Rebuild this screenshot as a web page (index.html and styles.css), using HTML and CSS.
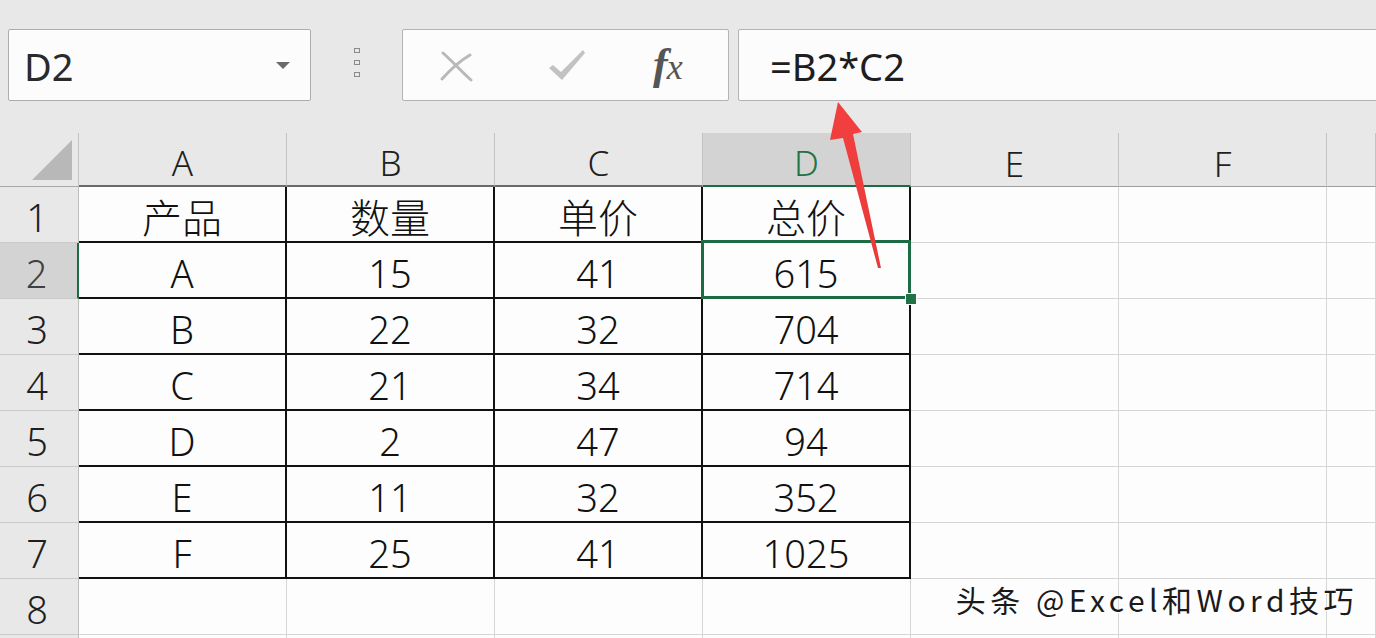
FILE: index.html
```html
<!DOCTYPE html>
<html lang="zh-CN">
<head>
<meta charset="utf-8">
<title>Excel</title>
<link rel="stylesheet" href="styles.css">
</head>
<body>
<div class="app">
  <div class="fbar">
    <div class="namebox">
      <span class="nb-text">D2</span>
      <svg class="nb-arrow" width="14" height="8" viewBox="0 0 14 8"><polygon points="0,0 14,0 7,7" fill="#6a6a6a"/></svg>
    </div>
    <div class="grip">
      <svg width="8" height="32" viewBox="0 0 8 32">
        <rect x="1.5" y="1.5" width="5" height="4" fill="none" stroke="#8a8a8a" stroke-width="1"/>
        <rect x="1.5" y="13.5" width="5" height="4" fill="none" stroke="#8a8a8a" stroke-width="1"/>
        <rect x="1.5" y="25.5" width="5" height="4" fill="none" stroke="#8a8a8a" stroke-width="1"/>
      </svg>
    </div>
    <div class="btnbox">
      <svg class="ic-x" width="34" height="32" viewBox="0 0 34 32">
        <path d="M3 3 C12 11 22 22 31 30" fill="none" stroke="#b9b9b9" stroke-width="3" stroke-linecap="round"/>
        <path d="M2 29 C10 20 18 12 30 5" fill="none" stroke="#b9b9b9" stroke-width="3" stroke-linecap="round"/>
      </svg>
      <svg class="ic-check" width="40" height="34" viewBox="0 0 40 34">
        <path d="M2 20 L6 17 L14 24 L36 2 L38 5 L15 32 Z" fill="#c2c2c2"/>
      </svg>
      <span class="fx">f<span class="fx-x">x</span></span>
    </div>
    <div class="formula">=B2*C2</div>
  </div>

  <div class="sheet">
    <div class="corner"><svg width="40" height="40" viewBox="0 0 40 40"><polygon points="40,0 40,40 0,40" fill="#b8b8b8"/></svg></div>
    <div class="ch ct">A</div>
    <div class="ch ct">B</div>
    <div class="ch ct">C</div>
    <div class="ch csel">D</div>
    <div class="ch">E</div>
    <div class="ch">F</div>
    <div class="ch"></div>

    <div class="rh">1</div>
    <div class="c t cjk">产品</div>
    <div class="c t cjk">数量</div>
    <div class="c t cjk">单价</div>
    <div class="c t cjk">总价</div>
    <div class="c"></div><div class="c"></div><div class="c"></div>

    <div class="rh rsel">2</div>
    <div class="c t">A</div>
    <div class="c t">15</div>
    <div class="c t">41</div>
    <div class="c t sel">615</div>
    <div class="c"></div><div class="c"></div><div class="c"></div>

    <div class="rh">3</div>
    <div class="c t">B</div>
    <div class="c t">22</div>
    <div class="c t">32</div>
    <div class="c t">704</div>
    <div class="c"></div><div class="c"></div><div class="c"></div>

    <div class="rh">4</div>
    <div class="c t">C</div>
    <div class="c t">21</div>
    <div class="c t">34</div>
    <div class="c t">714</div>
    <div class="c"></div><div class="c"></div><div class="c"></div>

    <div class="rh">5</div>
    <div class="c t">D</div>
    <div class="c t">2</div>
    <div class="c t">47</div>
    <div class="c t">94</div>
    <div class="c"></div><div class="c"></div><div class="c"></div>

    <div class="rh">6</div>
    <div class="c t">E</div>
    <div class="c t">11</div>
    <div class="c t">32</div>
    <div class="c t">352</div>
    <div class="c"></div><div class="c"></div><div class="c"></div>

    <div class="rh">7</div>
    <div class="c t">F</div>
    <div class="c t">25</div>
    <div class="c t">41</div>
    <div class="c t">1025</div>
    <div class="c"></div><div class="c"></div><div class="c"></div>

    <div class="rh">8</div>
    <div class="c"></div><div class="c"></div><div class="c"></div><div class="c"></div>
    <div class="c"></div><div class="c"></div><div class="c"></div>

    <div class="rh"></div>
    <div class="c"></div><div class="c"></div><div class="c"></div><div class="c"></div>
    <div class="c"></div><div class="c"></div><div class="c"></div>
  </div>

  <svg class="arrow" width="1376" height="638" viewBox="0 0 1376 638">
    <defs>
      <linearGradient id="ag" x1="0" y1="0" x2="0" y2="1">
        <stop offset="0" stop-color="#f2403f"/>
        <stop offset="1" stop-color="#e83a3a"/>
      </linearGradient>
    </defs>
    <polygon points="838,102 862,132 853,134 881,268 878,268 843,138 830,140" fill="url(#ag)"/>
  </svg>

  <div class="watermark">头条 @Excel和Word技巧</div>
</div>
</body>
</html>
```

FILE: styles.css
```css
html, body {
  margin: 0;
  padding: 0;
}
body {
  width: 1376px;
  height: 638px;
  overflow: hidden;
  background: #e8e8e8;
  font-family: "Noto Sans", "Noto Sans CJK SC", sans-serif;
}
.app {
  position: relative;
  width: 1376px;
  height: 638px;
  overflow: hidden;
}

/* formula bar */
.fbar {
  display: flex;
  align-items: stretch;
  height: 72px;
  padding: 29px 0 0 8px;
  margin-bottom: 32px;
}
.namebox {
  width: 303px;
  box-sizing: border-box;
  background: #fcfcfc;
  border: 1px solid #adadad;
  border-radius: 2px;
  display: flex;
  align-items: center;
  justify-content: space-between;
  padding: 0 20px 0 15px;
}
.nb-text {
  font-size: 38px;
  color: #2a2a2a;
  font-weight: 400;
  line-height: 1;
  padding-top: 2px;
}
.nb-arrow {
  margin-top: 2px;
}
.grip {
  width: 91px;
  display: flex;
  align-items: center;
  justify-content: center;
  padding-bottom: 4px;
}
.btnbox {
  width: 327px;
  box-sizing: border-box;
  background: #fcfcfc;
  border: 1px solid #b3b3b3;
  border-radius: 2px;
  display: flex;
  align-items: center;
  padding: 0 0 0 37px;
}
.ic-x {
  margin-top: 2px;
}
.ic-check {
  margin-left: 73px;
}
.fx {
  margin-left: 66px;
  font-family: "Liberation Serif", "DejaVu Serif", serif;
  font-style: italic;
  font-weight: 700;
  font-size: 44px;
  color: #555;
  line-height: 1;
  letter-spacing: -1px;
}
.fx-x {
  font-size: 36px;
  font-weight: 400;
}
.formula {
  flex: 1;
  margin-left: 9px;
  margin-right: -4px;
  background: #fcfcfc;
  border: 1px solid #b3b3b3;
  border-radius: 2px;
  font-size: 38px;
  color: #1e1e1e;
  display: flex;
  align-items: center;
  padding-left: 31px;
  padding-top: 1px;
}

/* sheet grid */
.sheet {
  display: grid;
  grid-template-columns: 79px repeat(6, 208px) 1fr;
  grid-template-rows: 54px repeat(8, 56px) 56px;
  background: #fdfdfd;
}
.corner {
  background: #e8e8e8;
  border-right: 1px solid #c4c4c4;
  border-bottom: 1px solid #a8a8a8;
  display: flex;
  align-items: flex-end;
  justify-content: flex-end;
  padding: 0 6px 6px 0;
}
.ch {
  background: #e8e8e8;
  border-right: 1px solid #c4c4c4;
  border-bottom: 1px solid #9e9e9e;
  display: flex;
  align-items: center;
  justify-content: center;
  font-size: 35px;
  font-weight: 300;
  color: #1f1f1f;
  padding-top: 7px;
  line-height: 1;
}
.ch.ct {
  border-bottom: 2px solid #6a6a6a;
}
.ch.csel {
  background: #d3d3d3;
  color: #217346;
  border-bottom: 2px solid #1f6b45;
}
.rh {
  background: #e8e8e8;
  border-right: 1px solid #bdbdbd;
  border-bottom: 1px solid #cacaca;
  display: flex;
  align-items: center;
  justify-content: center;
  font-size: 38px;
  font-weight: 300;
  color: #1f1f1f;
  padding-top: 5px;
  padding-right: 4px;
  line-height: 1;
}
.rh.rsel {
  background: #d3d3d3;
  color: #404040;
  border-right: 2px solid #1f6b45;
}
.c {
  box-sizing: border-box;
  background: #fdfdfd;
  border-right: 1px solid #d6d6d6;
  border-bottom: 1px solid #d6d6d6;
  display: flex;
  align-items: center;
  justify-content: center;
  font-size: 38px;
  font-weight: 300;
  color: #111;
  padding-top: 5px;
  line-height: 1;
}
.c.t {
  border-right: 2px solid #111;
  border-bottom: 2px solid #111;
}
.c.cjk {
  font-family: "Noto Sans CJK SC", sans-serif;
  font-size: 40px;
  padding-top: 4px;
}
.c.sel {
  position: relative;
}
.c.sel::before {
  content: "";
  position: absolute;
  left: -2px;
  top: -3px;
  right: -2px;
  bottom: -2px;
  border: 3px solid #1d6b44;
}
.c.sel::after {
  content: "";
  position: absolute;
  right: -8px;
  bottom: -8px;
  width: 10px;
  height: 10px;
  background: #217346;
  border: 1px solid #fff;
  z-index: 2;
}

/* overlays */
.arrow {
  position: absolute;
  left: 0;
  top: 0;
  pointer-events: none;
  z-index: 5;
}
.watermark {
  position: absolute;
  right: 18px;
  bottom: 17px;
  font-family: "Noto Sans CJK SC", sans-serif;
  font-size: 30px;
  letter-spacing: 4.5px;
  color: #1a1a1a;
  text-shadow: 1px 1px 0 #fff, -1px 0 0 #fff;
  z-index: 6;
}
```
